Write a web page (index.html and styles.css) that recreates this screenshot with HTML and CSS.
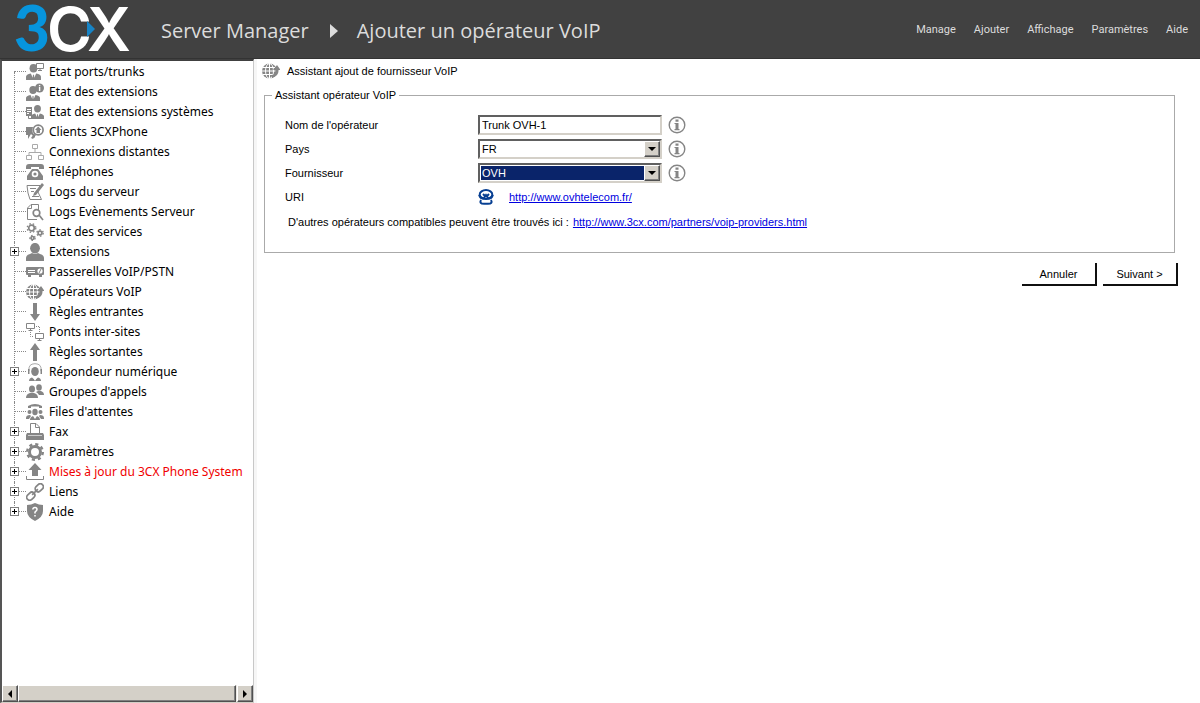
FILE: index.html
```html
<!DOCTYPE html>
<html lang="fr">
<head>
<meta charset="utf-8">
<title>3CX Server Manager</title>
<link rel="stylesheet" href="styles.css">
</head>
<body>
<svg class="sprite" aria-hidden="true">
  <symbol id="person" viewBox="0 0 18 18"><ellipse cx="9" cy="5.2" rx="4.9" ry="5.3"/><path d="M0 18V15Q0 12 4 11L6 10Q9 12 12 10L14 11Q18 12 18 15V18Z"/></symbol>
  <symbol id="agent" viewBox="0 0 14 15"><ellipse cx="7" cy="4" rx="3.7" ry="4"/><path d="M0 15V12Q0 10 4.500 9L6.300 13 6.500 10H7.500L7.700 13 9.500 9Q14 10 14 12V15Z"/></symbol>
  <symbol id="ports" viewBox="0 0 18 18"><use href="#agent" x="0" y="1" width="15" height="16"/><path d="M10.500 .5H17.500V5.500H10.500Z" fill="#fff" class="screen"/><path d="M14 6V8M12 7.500H16" class="line"/></symbol>
  <symbol id="extinfo" viewBox="0 0 18 18"><use href="#agent" x="0" y="3" width="14" height="15"/><circle cx="13.500" cy="5" r="4.500"/><path d="M12.900 2H14.300V3.300H12.900ZM12.900 4H14.300V8H12.900Z" fill="#fff"/></symbol>
  <symbol id="extsys" viewBox="0 0 18 18"><use href="#agent" x="5" y="2" width="13" height="14"/><path d="M0 4H6V13H0Z"/><path d="M1 6.500H5M1 8.500H5M1 10.500H3" stroke="#fff"/><path d="M2.500 13V15.500H5" class="line"/></symbol>
  <symbol id="clients" viewBox="0 0 18 18"><path d="M0 4H7Q5 9 9 12V15L5 11 2 16V12H0Z"/><circle cx="12.200" cy="7" r="4.900" class="line bold"/><path d="M12.200 3.500L15.500 7H14V10H10.500V7H9ZM8 11L5 15 7 16 10 12Z"/></symbol>
  <symbol id="remote" viewBox="0 0 18 18"><path d="M6.500 1.500H11.500V5.500H6.500ZM.5 12.500H5.500V16.500H.5ZM12.500 12.500H17.500V16.500H12.500ZM9 6V9M3 12V9.500H15V12" class="line pale"/></symbol>
  <symbol id="phone" viewBox="0 0 18 18"><path d="M0 6V4Q0 1 3 1H15Q18 1 18 4V6H13V4H5V6Z"/><path d="M6 6H12L17 13V17H1V13Z"/><circle cx="9" cy="11" r="3.300" fill="#fff"/><circle cx="9" cy="11" r="1.600"/></symbol>
  <symbol id="logs" viewBox="0 0 18 18"><path d="M1 2.500H14L12 9 15.500 16.500H4L2 10Z" class="line"/><path d="M4 5.500H10M5 8.500H8M6 13.500H13" class="line"/><path d="M16 0L18 2 10 12 7 13 8 10Z"/></symbol>
  <symbol id="search" viewBox="0 0 18 18"><path d="M11 16.500H1.500V5L5 1.500H12.500V7M2 5.500H5.500V2" class="line"/><circle cx="10.500" cy="10" r="3.300" class="line bold"/><path d="M13 12L17 17" class="line bold"/></symbol>
  <symbol id="services" viewBox="0 0 18 18"><circle cx="5.500" cy="5" r="2.800" class="line bold"/><circle cx="5.500" cy="5" r="4.300" class="teeth"/><circle cx="14" cy="10" r="1.900" class="line bold"/><circle cx="14" cy="10" r="3.200" class="teeth"/><circle cx="6.500" cy="15" r="1.500" class="line bold"/><circle cx="6.500" cy="15" r="2.600" class="teeth"/></symbol>
  <symbol id="gateway" viewBox="0 0 18 18"><rect y="4" width="18" height="8" rx="1"/><path d="M2 12H5V14H2ZM13 12H16V14H13Z"/><path d="M2 7.500H9M2 9.500H9" stroke="#fff"/><circle cx="14" cy="8" r="2.600" fill="#fff"/><path d="M13 10L15 6" class="line"/></symbol>
  <symbol id="globe" viewBox="0 0 18 18"><circle cx="7.500" cy="9" r="7.500"/><path d="M7.500 1V17M0 9H14M1 5.500H13M1 12.500H13" stroke="#fff"/><ellipse cx="7.500" cy="9" rx="4" ry="7.500" fill="none" stroke="#fff"/><path d="M10 13Q13.500 12 13.500 8H11L15 3 18.500 8H16.500Q17 14 10 16Z"/></symbol>
  <symbol id="down" viewBox="0 0 18 18"><path d="M7 0H11V11H14L9 18 4 11H7Z"/></symbol>
  <symbol id="up" viewBox="0 0 18 18"><path d="M7 18H11V7H14L9 0 4 7H7Z"/></symbol>
  <symbol id="bridge" viewBox="0 0 18 18"><path d="M.5.5H8.500V5.500H.5ZM9.500 10.500H17.500V15.500H9.500ZM2.500 7.500H6.500M11.500 17.500H15.500M4.500 6V7M13.500 16V17" class="line"/><path d="M10 3.500H13.500V9M4.500 9V13.500H8" class="line dash"/></symbol>
  <symbol id="ivr" viewBox="0 0 18 18"><path d="M3 8Q2 .7 9 .7T15 8" class="line pale"/><ellipse cx="9" cy="8.500" rx="3.800" ry="4.500"/><path d="M3 18Q3 15 6 14.500L9 17 12 14.500Q15 15 15 18Z"/><path d="M9 18L7.500 15H10.500Z" fill="#fff"/><path d="M2 6H3.500V11H2ZM14.500 6H16V11H14.500Z"/></symbol>
  <symbol id="groups" viewBox="0 0 18 18"><ellipse cx="6" cy="6" rx="3" ry="3.500"/><path d="M0 15Q0 11 4 10H8Q12 11 12 15Z"/><ellipse cx="13" cy="4.500" rx="2.800" ry="3.300"/><path d="M10 9L12 8H15Q18 9 18 12H13Q12 10 10 9Z"/></symbol>
  <symbol id="queues" viewBox="0 0 18 18"><path d="M2 5V3Q9-1 16 3V5H13V3.500H5V5Z"/><circle cx="3.500" cy="9" r="2"/><circle cx="14.500" cy="9" r="2"/><ellipse cx="9" cy="9" rx="2.700" ry="3.300"/><path d="M0 15Q0 12 4 12L5 13 3 16H0ZM18 15Q18 12 14 12L13 13 15 16H18ZM4 17Q4 14 7 13L9 16 11 13Q14 14 14 17Z"/></symbol>
  <symbol id="fax" viewBox="0 0 18 18"><path d="M4.500 10V.5H10L13.500 4V10M9.500 1V4.500H13" class="line"/><path d="M1 10H17L18 12V17H0V12Z"/><path d="M2 12.500H16" stroke="#ccc"/></symbol>
  <symbol id="gear" viewBox="0 0 18 18"><circle cx="9" cy="9" r="5.500" class="ring"/><circle cx="9" cy="9" r="7.800" class="cogs"/></symbol>
  <symbol id="update" viewBox="0 0 18 18"><path d="M6 13V7H2.500L9 0 15.500 7H12V13Z"/><path d="M.5 13V16.500H17.500V13" class="line"/></symbol>
  <symbol id="chain" viewBox="0 0 18 18"><g transform="rotate(-45 9 9)"><rect x="-1.500" y="6" width="9" height="6" rx="3" class="line bold"/><rect x="10.500" y="6" width="9" height="6" rx="3" class="line bold"/><path d="M5 9H13" class="line bold"/></g></symbol>
  <symbol id="help" viewBox="0 0 18 18"><path d="M9 0Q13 2 17 2V8Q17 14 9 18Q1 14 1 8V2Q5 2 9 0Z"/><path d="M6.800 6.500Q7 4.500 9 4.500T11 6.500Q11 7.500 9 9V10.500M9 12V13.500" fill="none" stroke="#fff" stroke-width="1.500"/></symbol>
  <symbol id="info" viewBox="0 0 18 18"><circle cx="9" cy="9" r="7.800" class="line ringlet"/><path d="M7.500 3.500H10.500V5.800H7.500ZM6.500 7H10.500V13H11.500V14.200H6.500V13H7.500V8H6.500Z"/></symbol>
</svg>

<header class="topbar">
  <svg class="logo" viewBox="0 0 120 58" role="img" aria-label="3CX">
    <text x="0" y="51" class="logo-three">3</text>
    <text x="33" y="51" class="logo-cx">C</text>
    <text x="73" y="51" class="logo-cx">X</text>
    <path d="M73 21L81 29 73 37Z" class="logo-arrow"/>
  </svg>
  <h1 class="crumbs"><span>Server Manager</span><i class="crumb-arrow"></i><span>Ajouter un opérateur VoIP</span></h1>
  <nav class="menu"><a href="#">Manage</a><a href="#">Ajouter</a><a href="#">Affichage</a><a href="#">Paramètres</a><a href="#">Aide</a></nav>
</header>

<div class="workspace">
  <aside class="sidebar">
    <ul class="tree">
      <li><svg><use href="#ports"/></svg><a href="#">Etat ports/trunks</a></li>
      <li><svg><use href="#extinfo"/></svg><a href="#">Etat des extensions</a></li>
      <li><svg><use href="#extsys"/></svg><a href="#">Etat des extensions systèmes</a></li>
      <li><svg><use href="#clients"/></svg><a href="#">Clients 3CXPhone</a></li>
      <li><svg><use href="#remote"/></svg><a href="#">Connexions distantes</a></li>
      <li><svg><use href="#phone"/></svg><a href="#">Téléphones</a></li>
      <li><svg><use href="#logs"/></svg><a href="#">Logs du serveur</a></li>
      <li><svg><use href="#search"/></svg><a href="#">Logs Evènements Serveur</a></li>
      <li><svg><use href="#services"/></svg><a href="#">Etat des services</a></li>
      <li><button class="expand" aria-label="Développer Extensions"></button><svg><use href="#person"/></svg><a href="#">Extensions</a></li>
      <li><svg><use href="#gateway"/></svg><a href="#">Passerelles VoIP/PSTN</a></li>
      <li><svg><use href="#globe"/></svg><a href="#">Opérateurs VoIP</a></li>
      <li><svg><use href="#down"/></svg><a href="#">Règles entrantes</a></li>
      <li><svg><use href="#bridge"/></svg><a href="#">Ponts inter-sites</a></li>
      <li><svg><use href="#up"/></svg><a href="#">Règles sortantes</a></li>
      <li><button class="expand" aria-label="Développer Répondeur numérique"></button><svg><use href="#ivr"/></svg><a href="#">Répondeur numérique</a></li>
      <li><svg><use href="#groups"/></svg><a href="#">Groupes d'appels</a></li>
      <li><svg><use href="#queues"/></svg><a href="#">Files d'attentes</a></li>
      <li><button class="expand" aria-label="Développer Fax"></button><svg><use href="#fax"/></svg><a href="#">Fax</a></li>
      <li><button class="expand" aria-label="Développer Paramètres"></button><svg><use href="#gear"/></svg><a href="#">Paramètres</a></li>
      <li><button class="expand" aria-label="Développer Mises à jour"></button><svg><use href="#update"/></svg><a href="#" class="alert">Mises à jour du 3CX Phone System</a></li>
      <li><button class="expand" aria-label="Développer Liens"></button><svg><use href="#chain"/></svg><a href="#">Liens</a></li>
      <li><button class="expand" aria-label="Développer Aide"></button><svg><use href="#help"/></svg><a href="#">Aide</a></li>
    </ul>
    <div class="scrollbar">
      <button class="scroll-btn" aria-label="Défiler à gauche"><i class="tri left"></i></button>
      <div class="thumb"></div>
      <button class="scroll-btn" aria-label="Défiler à droite"><i class="tri right"></i></button>
    </div>
  </aside>

  <main class="content">
    <h2 class="title"><svg><use href="#globe"/></svg>Assistant ajout de fournisseur VoIP</h2>
    <form>
      <fieldset class="group">
        <legend>Assistant opérateur VoIP</legend>
        <div class="row"><label for="name">Nom de l'opérateur</label><input id="name" class="field" type="text" value="Trunk OVH-1"><svg class="info"><use href="#info"/></svg></div>
        <div class="row"><label for="country">Pays</label><div class="field combo"><select id="country"><option>FR</option></select><span class="drop"><i class="tri down"></i></span></div><svg class="info"><use href="#info"/></svg></div>
        <div class="row"><label for="provider">Fournisseur</label><div class="field combo selected"><select id="provider"><option>OVH</option></select><span class="drop"><i class="tri down"></i></span></div><svg class="info"><use href="#info"/></svg></div>
        <div class="row"><span class="caption">URI</span><svg class="brand" viewBox="0 0 16 16"><ellipse cx="8" cy="5.500" rx="6.300" ry="4.500"/><path d="M1 6Q3 11 6 9L8 6 10 9Q13 11 15 6M5 5L7 7M11 5L9 7M3 11Q1 14.800 6 14.800H10Q15 14.800 13 11"/></svg><a href="#">http://www.ovhtelecom.fr/</a></div>
        <p class="note"><span>D'autres opérateurs compatibles peuvent être trouvés ici :</span><a href="#">http://www.3cx.com/partners/voip-providers.html</a></p>
      </fieldset>
      <div class="actions"><button type="button">Annuler</button><button type="button">Suivant &gt;</button></div>
    </form>
  </main>
</div>
</body>
</html>
```
FILE: styles.css
```css
* { box-sizing: border-box; }
body {
  margin: 0;
  height: 100vh;
  display: flex;
  flex-direction: column;
  background: #fff;
  color: #000;
  font: 11px/14px "Liberation Sans", Arial, sans-serif;
}
svg { fill: #858585; flex: none; }
.sprite { display: none; }
.line { fill: none; stroke: #858585; stroke-width: 1px; }
.screen { stroke: #858585; }
.bold { stroke-width: 1.7px; }
.ringlet { stroke-width: 1.4px; }
.pale { stroke: #aaa; }
.dash { stroke-dasharray: 1 1; }
.teeth { fill: none; stroke: #858585; stroke-width: 1.3px; stroke-dasharray: 1.5 2; }
.ring { fill: none; stroke: #858585; stroke-width: 3px; }
.cogs { fill: none; stroke: #858585; stroke-width: 2.4px; stroke-dasharray: 3.1 3.026; }

.topbar {
  flex: none;
  height: 59px;
  display: flex;
  align-items: center;
  padding: 0 12px 0 14px;
  background: #414141;
  border-bottom: 1px solid #333;
  color: #dcdcdc;
}
.logo { width: 120px; height: 58px; overflow: visible; }
.logo-three { font: 900 62px Lato, sans-serif; fill: #0795dd; }
.logo-cx { font: 600 61px Inter, sans-serif; fill: #fff; }
.logo-arrow { fill: #1784c6; }
.crumbs {
  display: flex;
  align-items: center;
  margin: 0 auto 0 27px;
  padding-top: 3px;
  font: 400 20px/28px "Open Sans", "Noto Sans", sans-serif;
}
.crumb-arrow {
  margin: 0 19px 0 21px;
  border: 7px solid transparent;
  border-left: 8px solid #dcdcdc;
  border-right-width: 0;
}
.menu { display: flex; gap: 18px; padding-top: 2px; font: 11px/14px Roboto, sans-serif; }
.menu a { color: inherit; text-decoration: none; }

.workspace { flex: 1; display: flex; min-height: 0; }
.sidebar {
  flex: none;
  width: 254px;
  display: flex;
  flex-direction: column;
  border: 2px solid #404040;
  border-left-color: #555;
  border-right: 1px solid #c8c8c8;
  border-bottom: 1px solid #d4d0c8;
}
.tree {
  flex: 1;
  margin: 0;
  padding: 1px 0 0;
  list-style: none;
  overflow: hidden;
  font: 12px/20px "Noto Sans", sans-serif;
}
.tree li {
  position: relative;
  height: 20px;
  display: flex;
  align-items: center;
  gap: 5px;
  padding-left: 24px;
  white-space: nowrap;
}
.tree svg { width: 18px; height: 18px; }
.tree a { color: inherit; text-decoration: none; }
.tree .alert { color: #f00000; }
.tree li::before {
  content: "";
  position: absolute;
  left: 12px;
  top: 0;
  bottom: 0;
  border-left: 1px dotted #888;
}
.tree li:first-child::before { top: 10px; }
.tree li:last-child::before { bottom: 10px; }
.tree li::after {
  content: "";
  position: absolute;
  left: 12px;
  width: 12px;
  top: 9px;
  border-top: 1px dotted #888;
}
.expand {
  position: absolute;
  z-index: 1;
  left: 8px;
  top: 5px;
  width: 9px;
  height: 9px;
  padding: 0;
  border: 1px solid #808080;
  background:
    linear-gradient(#000, #000) center / 5px 1px no-repeat,
    linear-gradient(#000, #000) center / 1px 5px no-repeat,
    #fff;
}
.scrollbar { flex: none; height: 17px; display: flex; background: #ece9e4; }
.scroll-btn, .thumb, .drop {
  display: flex;
  align-items: center;
  justify-content: center;
  padding: 0;
  background: #d4d0c8;
  border: 1px solid;
  border-color: #fff #505050 #505050 #fff;
  box-shadow: inset -1px -1px #808080;
}
.scroll-btn { width: 16px; }
.thumb { flex: 1; margin-right: 1px; }
.tri { border: 4px solid transparent; }
.tri.left { border-right-color: #000; border-left-width: 0; }
.tri.right { border-left-color: #000; border-right-width: 0; }
.tri.down { border-top-color: #000; border-bottom-width: 0; }

.content { flex: 1; min-width: 0; border-left: 3px solid #f6f6f6; padding: 2px 22px 0 5px; }
.title {
  display: flex;
  align-items: center;
  gap: 7px;
  margin: 0;
  height: 20px;
  font-size: 11px;
  font-weight: 400;
}
.title svg { width: 18px; height: 18px; }
.group { margin: 7px 3px 0 2px; padding: 11px 20px 23px; border: 1px solid #aaa; min-width: 0; }
.group legend { margin-left: -13px; padding: 0 3px; }
.row { display: flex; align-items: center; height: 24px; }
.row label, .caption { width: 193px; }
.field {
  width: 184px;
  height: 20px;
  border: 2px solid;
  border-color: #606060 #d4d0c8 #d4d0c8 #606060;
  background: #fff;
  font: inherit;
}
input.field { padding: 0 2px; border-radius: 0; }
.combo { display: grid; }
.combo select {
  grid-area: 1 / 1;
  appearance: none;
  width: 100%;
  padding: 0 18px 0 2px;
  border: 0;
  border-radius: 0;
  background: none;
  color: inherit;
  font: inherit;
}
.drop { grid-area: 1 / 1; justify-self: end; width: 16px; pointer-events: none; }
.selected select { color: #fff; background: #0a246a; border: 1px solid #fff; padding-left: 1px; }
.info { width: 18px; height: 18px; margin-left: 6px; }
.brand { width: 16px; height: 16px; margin-right: 15px; fill: none; stroke: #073f92; stroke-width: 2px; }
a { color: #0000e0; }
.note { display: flex; gap: 4px; margin: 6px 3px 0; }
.actions { display: flex; justify-content: flex-end; gap: 6px; margin-top: 10px; }
.actions button {
  width: 75px;
  height: 23px;
  border: solid;
  border-width: 0 2px 2px 0;
  border-color: #101010;
  background: #fff;
  color: inherit;
  font: inherit;
}
```
